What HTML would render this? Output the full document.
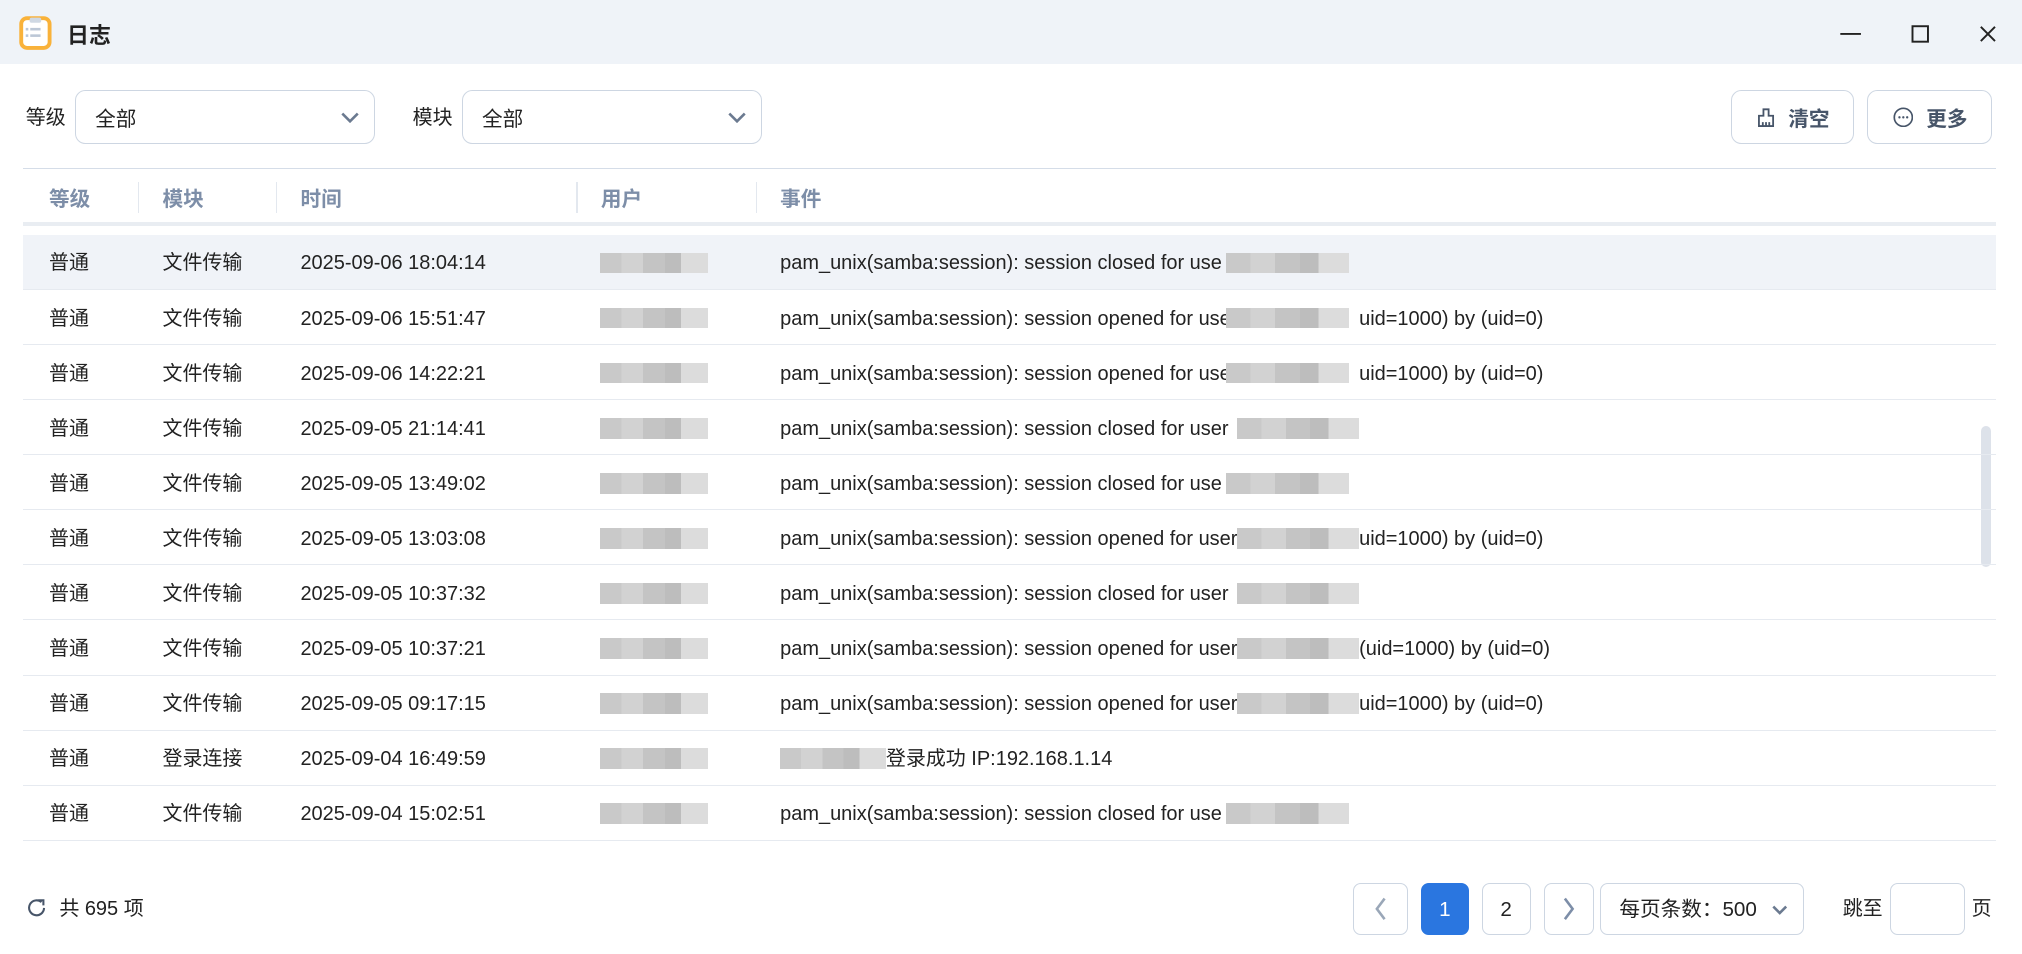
<!DOCTYPE html>
<html><head><meta charset="utf-8"><style>
*{box-sizing:border-box;margin:0;padding:0}
html,body{width:2022px;height:954px;overflow:hidden;background:#fff}
#w{zoom:1.2895;width:1568px;height:740px;position:relative;font-family:"Liberation Sans","Noto Sans CJK SC",sans-serif;color:#222;font-size:15.5px;line-height:20px}
.a{position:absolute}
.tb{left:0;top:0;width:1568px;height:50px;background:#eff3f8}
.sel{border:1px solid #cdd6e2;border-radius:8px;height:42px;background:#fff}
.sel span{position:absolute;left:15px;top:12px;font-size:16px}
.btn{border:1px solid #cdd6e2;border-radius:8px;height:42px;background:#fff;font-weight:bold;color:#475569;font-size:16px}
.hd{color:#7d8ea8;font-weight:bold;font-size:16px;top:145px}
.sep{top:141px;width:1px;height:24px;background:#e3e8ef}
.row{left:18px;width:1530px;height:43px;border-bottom:1px solid #e6eaf0}
.row div{position:absolute;top:13px;white-space:nowrap}
.bl{position:absolute;height:16px;background:linear-gradient(90deg,#c9c9c9 0 20%,#d2d2d2 20% 40%,#c4c4c4 40% 60%,#bdbdbd 60% 75%,#dcdcdc 75% 100%);top:14px!important}
.pb{border:1px solid #cdd6e2;border-radius:6px;height:40px;top:685px;background:#fff;text-align:center;line-height:40px;font-size:16px}
</style></head><body><div id="w">
<div class="a tb"></div>
<svg class="a" style="left:14px;top:12px" width="27" height="27" viewBox="0 0 27 27"><rect x="1" y="1" width="25" height="26" rx="6" fill="#f9b23a"/><rect x="4" y="4" width="19" height="20" rx="3" fill="#fff"/><rect x="9" y="2" width="9" height="4" rx="1.5" fill="#cfd8e3"/><g fill="#bcc7d6"><rect x="6" y="10" width="2" height="2"/><rect x="9.5" y="10" width="8" height="2"/><rect x="6" y="15" width="2" height="2"/><rect x="9.5" y="15" width="8" height="2"/></g></svg>
<div class="a" style="left:52px;top:18px;font-weight:bold;font-size:17px">日志</div>
<svg class="a" style="left:1426px;top:18px" width="130" height="18" viewBox="0 0 130 18"><path d="M1 8.5H17" stroke="#222" stroke-width="1.5"/><rect x="57" y="2.5" width="12" height="12" fill="none" stroke="#222" stroke-width="1.5"/><path d="M110 3L121 14M121 3L110 14" stroke="#222" stroke-width="1.5"/></svg>
<div class="a" style="left:20px;top:82px">等级</div>
<div class="a sel" style="left:58px;top:70px;width:233px"><span>全部</span><svg class="a" style="right:12px;top:15px" width="14" height="10"><path d="M1 2l6 6 6-6" fill="none" stroke="#6b7a90" stroke-width="2"/></svg></div>
<div class="a" style="left:320px;top:82px">模块</div>
<div class="a sel" style="left:358px;top:70px;width:233px"><span>全部</span><svg class="a" style="right:12px;top:15px" width="14" height="10"><path d="M1 2l6 6 6-6" fill="none" stroke="#6b7a90" stroke-width="2"/></svg></div>
<div class="a btn" style="left:1342px;top:70px;width:96px"><svg class="a" style="left:20px;top:13px" width="14" height="16"><path d="M5 1h4v5h3.5v8h-11v-8h3.5z M4.5 14v-3 M7 14v-3 M9.5 14v-3" fill="none" stroke="#475569" stroke-width="1.4"/></svg><span class="a" style="left:44px;top:12px">清空</span></div>
<div class="a btn" style="left:1448px;top:70px;width:97px"><svg class="a" style="left:19px;top:12px" width="16" height="16"><circle cx="8" cy="8" r="7" fill="none" stroke="#475569" stroke-width="1.3"/><g fill="#475569"><circle cx="5" cy="8" r=".9"/><circle cx="8" cy="8" r=".9"/><circle cx="11" cy="8" r=".9"/></g></svg><span class="a" style="left:45px;top:12px">更多</span></div>
<div class="a" style="left:18px;top:130px;width:1530px;height:1px;background:#d5dde8"></div>
<div class="a hd" style="left:38px">等级</div><div class="a hd" style="left:126px">模块</div><div class="a hd" style="left:233px">时间</div><div class="a hd" style="left:466px">用户</div><div class="a hd" style="left:605px">事件</div>
<div class="a sep" style="left:107px"></div><div class="a sep" style="left:214px"></div><div class="a sep" style="left:447px"></div><div class="a sep" style="left:586px"></div>
<div class="a" style="left:18px;top:172px;width:1530px;height:3px;background:#e9edf2"></div>
<div class="a" style="left:1536px;top:330px;width:8px;height:110px;border-radius:4px;background:#dde2ea"></div>
<div id="rows"></div>
<svg class="a" style="left:20px;top:696px" width="17" height="17" viewBox="0 0 17 17"><path d="M14 8.5A5.8 5.8 0 1 1 12 4" fill="none" stroke="#475569" stroke-width="1.6"/><path d="M9.5 2.5h4v4" fill="none" stroke="#475569" stroke-width="1.6"/></svg>
<div class="a" style="left:46px;top:696px">共 695 项</div>
<div class="a pb" style="left:1049px;width:43px"><svg width="12" height="20" style="margin-top:9px"><path d="M9 2L3 10l6 8" fill="none" stroke="#9aa7b8" stroke-width="2"/></svg></div>
<div class="a pb" style="left:1102px;width:37px;background:#2a76e0;border-color:#2a76e0;color:#fff">1</div>
<div class="a pb" style="left:1149px;width:38px">2</div>
<div class="a pb" style="left:1197px;width:39px"><svg width="12" height="20" style="margin-top:9px"><path d="M3 2l6 8-6 8" fill="none" stroke="#7d8ea8" stroke-width="2"/></svg></div>
<div class="a pb" style="left:1241px;width:158px;text-align:left;padding-left:14px">每页条数：500<svg class="a" style="right:12px;top:15px" width="12" height="9"><path d="M1 2l5 5 5-5" fill="none" stroke="#6b7a90" stroke-width="2"/></svg></div>
<div class="a" style="left:1429px;top:696px">跳至</div>
<div class="a pb" style="left:1466px;width:58px"></div>
<div class="a" style="left:1529px;top:696px">页</div>
</div>
<script>
var d=[["文件传输","2025-09-06 18:04:14","pam_unix(samba:session): session closed for use",0],
["文件传输","2025-09-06 15:51:47","pam_unix(samba:session): session opened for use",1],
["文件传输","2025-09-06 14:22:21","pam_unix(samba:session): session opened for use",1],
["文件传输","2025-09-05 21:14:41","pam_unix(samba:session): session closed for user",0],
["文件传输","2025-09-05 13:49:02","pam_unix(samba:session): session closed for use",0],
["文件传输","2025-09-05 13:03:08","pam_unix(samba:session): session opened for user",1],
["文件传输","2025-09-05 10:37:32","pam_unix(samba:session): session closed for user",0],
["文件传输","2025-09-05 10:37:21","pam_unix(samba:session): session opened for user",2],
["文件传输","2025-09-05 09:17:15","pam_unix(samba:session): session opened for user",1],
["登录连接","2025-09-04 16:49:59","",3],
["文件传输","2025-09-04 15:02:51","pam_unix(samba:session): session closed for use",0]];
var h="";d.forEach(function(r,i){var t=182+i*42.7;
var ev=r[3]==3?'<div class="bl" style="left:587px;width:82px"></div><div style="left:669px">登录成功 IP:192.168.1.14</div>':
'<div style="left:587px">'+r[2]+'</div><div class="bl" style="left:'+(r[2].length>47?941:933)+'px;width:95px"></div>'+(r[3]==1?'<div style="left:1036px">uid=1000) by (uid=0)</div>':r[3]==2?'<div style="left:1036px">(uid=1000) by (uid=0)</div>':'');
h+='<div class="a row" style="top:'+t+'px;'+(i==0?'background:#f0f3f8':'')+'"><div style="left:20px">普通</div><div style="left:108px">'+r[0]+'</div><div style="left:215px">'+r[1]+'</div><div class="bl" style="left:447px;width:84px"></div>'+ev+'</div>';});
document.getElementById("rows").innerHTML=h;
</script>
</body></html>
